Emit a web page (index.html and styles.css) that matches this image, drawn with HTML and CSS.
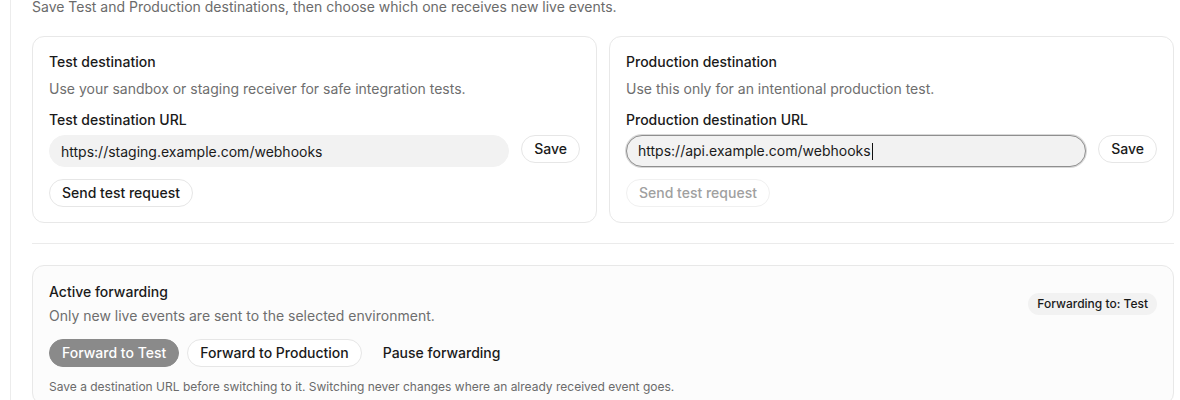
FILE: index.html
```html
<!DOCTYPE html>
<html lang="en">
<head>
<meta charset="utf-8">
<title>Destinations</title>
<link rel="stylesheet" href="styles.css">
</head>
<body>
<div class="panel">
  <p class="intro">Save Test and Production destinations, then choose which one receives new live events.</p>
  <div class="dest-grid">
    <section class="card">
      <h3 class="card-title">Test destination</h3>
      <p class="card-desc">Use your sandbox or staging receiver for safe integration tests.</p>
      <label class="field-label" for="test-url">Test destination URL</label>
      <div class="field-row">
        <input id="test-url" class="url-input" type="text" value="https://staging.example.com/webhooks">
        <button class="btn">Save</button>
      </div>
      <div class="actions">
        <button class="btn">Send test request</button>
      </div>
    </section>
    <section class="card">
      <h3 class="card-title">Production destination</h3>
      <p class="card-desc">Use this only for an intentional production test.</p>
      <label class="field-label" for="prod-url">Production destination URL</label>
      <div class="field-row">
        <div class="url-input focused">https://api.example.com/webhooks<span class="caret"></span></div>
        <button class="btn">Save</button>
      </div>
      <div class="actions">
        <button class="btn disabled">Send test request</button>
      </div>
    </section>
  </div>
  <hr class="divider">
  <section class="card forwarding">
    <div class="fw-head">
      <div>
        <h3 class="card-title">Active forwarding</h3>
        <p class="fw-desc">Only new live events are sent to the selected environment.</p>
      </div>
      <span class="badge">Forwarding to: Test</span>
    </div>
    <div class="fw-buttons">
      <button class="btn active">Forward to Test</button>
      <button class="btn">Forward to Production</button>
      <button class="btn ghost">Pause forwarding</button>
    </div>
    <p class="note">Save a destination URL before switching to it. Switching never changes where an already received event goes.</p>
  </section>
</div>
</body>
</html>
```

FILE: styles.css
```css
* { box-sizing: border-box; }
html, body { margin: 0; padding: 0; background: #fff; }
body {
  font-family: Inter, "Noto Sans", "Liberation Sans", sans-serif;
  font-size: 14px;
  line-height: 20px;
  color: #1a1a1a;
  overflow: hidden;
}
.panel {
  margin-left: 10px;
  border-left: 1px solid #ececec;
  padding-left: 21px;
  width: 1185px;
  padding-right: 21px;
}
.intro {
  margin: -3px 0 19px;
  color: #6b6b6b;
}
.dest-grid {
  display: grid;
  grid-template-columns: 1fr 1fr;
  gap: 12px;
  width: 1142px;
}
.card {
  border: 1px solid #e8e8e8;
  border-radius: 12px;
  padding: 15px 16px 15px;
  display: flex;
  flex-direction: column;
  background: #fff;
}
.card-title {
  margin: 0;
  font-size: 14px;
  font-weight: 500;
  line-height: 20px;
  color: #1a1a1a;
}
.card-desc {
  margin: 7px 0 0;
  color: #6e6e6e;
}
.field-label {
  margin-top: 11px;
  font-weight: 500;
  color: #1a1a1a;
}
.field-row {
  margin-top: 5px;
  display: flex;
  align-items: flex-start;
  gap: 12px;
}
.url-input {
  flex: 1;
  height: 32px;
  border: 1px solid #f2f2f2;
  background: #f2f2f2;
  border-radius: 16px;
  padding: 0 11px;
  font: inherit;
  color: #1a1a1a;
  outline: none;
  display: flex;
  align-items: center;
}
.url-input.focused {
  border: 1px solid #8f8f8f;
  box-shadow: 0 0 0 1px #d8d8d8;
}
.caret {
  display: inline-block;
  width: 1px;
  height: 17px;
  background: #111;
  margin-left: 1px;
}
.btn {
  font: inherit;
  font-weight: 500;
  color: #1a1a1a;
  background: #fff;
  border: 1px solid #e6e6e6;
  border-radius: 14px;
  height: 28px;
  padding: 0 12px;
  line-height: 26px;
  cursor: pointer;
}
.actions {
  margin-top: 12px;
  display: flex;
}
.btn.disabled {
  color: #a0a0a0;
  border-color: #f0f0f0;
}
.divider {
  border: 0;
  border-top: 1px solid #ebebeb;
  margin: 20px 0 21px;
  width: 1142px;
}
.forwarding {
  width: 1142px;
  background: #fcfcfc;
  padding-top: 16px;
  height: 140px;
}
.fw-head {
  display: flex;
  align-items: center;
  justify-content: space-between;
}
.fw-desc {
  margin: 4px 0 0;
  color: #6e6e6e;
}
.badge {
  font-size: 12px;
  font-weight: 500;
  background: #f2f2f2;
  border-radius: 11px;
  padding: 0 9px;
  line-height: 22px;
  color: #1a1a1a;
}
.fw-buttons {
  margin-top: 13px;
  display: flex;
  gap: 8px;
}
.btn.active {
  background: #8a8a8a;
  border-color: #8a8a8a;
  color: #fff;
}
.btn.ghost {
  border-color: transparent;
  background: transparent;
}
.note {
  margin: 12px 0 0;
  font-size: 12px;
  line-height: 16px;
  color: #6b6b6b;
}
```
